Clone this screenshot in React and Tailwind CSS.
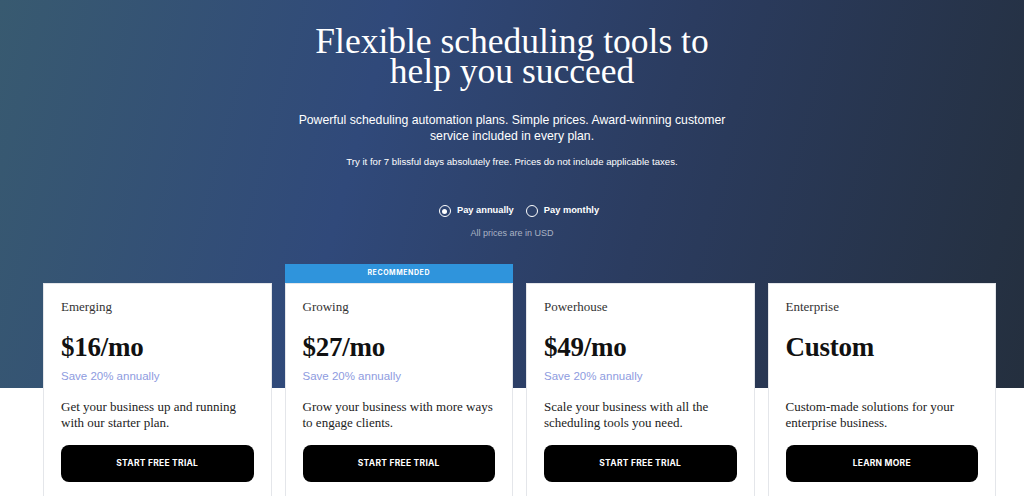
import React, { useState } from 'react'

const serif = { fontFamily: '"Liberation Serif", "DejaVu Serif", serif' }
const arial = { fontFamily: '"Liberation Sans", Arial, sans-serif' }

const plans = [
  { name: 'Emerging', price: '$16/mo', save: true, desc: 'Get your business up and running with our starter plan.', cta: 'Start free trial' },
  { name: 'Growing', price: '$27/mo', save: true, desc: 'Grow your business with more ways to engage clients.', cta: 'Start free trial', recommended: true },
  { name: 'Powerhouse', price: '$49/mo', save: true, desc: 'Scale your business with all the scheduling tools you need.', cta: 'Start free trial' },
  { name: 'Enterprise', price: 'Custom', save: false, desc: 'Custom-made solutions for your enterprise business.', cta: 'Learn more' },
]

function Radio({ checked, label, onClick }) {
  return (
    <button type="button" onClick={onClick} className="flex items-center gap-[6px] text-white">
      <span className="w-[12px] h-[12px] rounded-full border-[1.5px] border-white flex items-center justify-center">
        {checked && <span className="w-[5px] h-[5px] rounded-full bg-white"></span>}
      </span>
      <span className="text-[9.3px] font-bold" style={arial}>{label}</span>
    </button>
  )
}

function PlanCard({ plan }) {
  return (
    <div className="flex flex-col">
      <div className="h-[19px]">
        {plan.recommended && (
          <div className="h-full bg-[#2f94dc] flex items-center justify-center text-white text-[7px] font-bold tracking-[0.08em]">
            RECOMMENDED
          </div>
        )}
      </div>
      <div className="bg-white border border-[#e4e6ea] h-[260px] px-[17px] pt-[13px]">
        <div className="text-[13px] text-[#333]" style={serif}>{plan.name}</div>
        <div className="mt-[14px] text-[27px] font-bold text-[#111] leading-[32px] tracking-[-0.01em]" style={serif}>{plan.price}</div>
        <div className="h-[22px] mt-[5px] text-[11.5px] leading-[16px] text-[#8e9be0]" style={arial}>
          {plan.save ? 'Save 20% annually' : ''}
        </div>
        <p className="mt-[9px] text-[13px] leading-[16px] text-[#222] h-[32px]" style={serif}>{plan.desc}</p>
        <button type="button" className="mt-[14px] w-full h-[37px] rounded-[8px] bg-black text-white text-[8.5px] font-bold uppercase tracking-[0.03em]">
          {plan.cta}
        </button>
      </div>
    </div>
  )
}

export default function App() {
  const [annual, setAnnual] = useState(true)
  return (
    <div className="w-full h-[496px] overflow-hidden bg-white" style={{ fontFamily: 'Inter, "Noto Sans", sans-serif' }}>
      <div className="h-[388px] bg-[linear-gradient(105deg,#385a70_0%,#30497a_35%,#2b3c60_62%,#242f3e_100%)] flex flex-col items-center pt-[26px]">
        <h1 className="text-white text-[35.5px] leading-[30px] text-center" style={serif}>
          Flexible scheduling tools to<br />help you succeed
        </h1>
        <p className="mt-[26px] text-white text-[12.25px] leading-[16px] text-center w-[440px]" style={arial}>
          Powerful scheduling automation plans. Simple prices. Award-winning customer service included in every plan.
        </p>
        <p className="mt-[11px] text-white text-[9.6px]" style={arial}>
          Try it for 7 blissful days absolutely free. Prices do not include applicable taxes.
        </p>
        <div className="mt-[35px] flex items-center gap-[12px] pl-[14px]">
          <Radio checked={annual} label="Pay annually" onClick={() => setAnnual(true)} />
          <Radio checked={!annual} label="Pay monthly" onClick={() => setAnnual(false)} />
        </div>
        <div className="mt-[9px] text-[9px] text-[#aab3c4]" style={arial}>All prices are in USD</div>
      </div>
      <div className="mt-[-124px] pl-[43px]">
        <div className="w-[953px] grid grid-cols-4 gap-[13px]">
          {plans.map(p => <PlanCard key={p.name} plan={p} />)}
        </div>
      </div>
    </div>
  )
}
